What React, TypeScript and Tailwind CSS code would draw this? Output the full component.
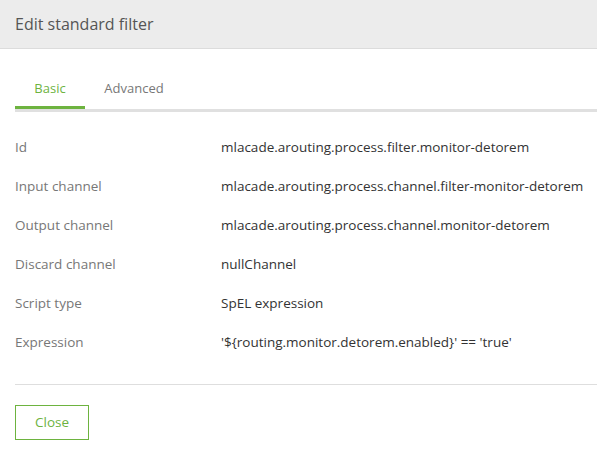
const ROWS: [string, string][] = [
  ["Id", "mlacade.arouting.process.filter.monitor-detorem"],
  ["Input channel", "mlacade.arouting.process.channel.filter-monitor-detorem"],
  ["Output channel", "mlacade.arouting.process.channel.monitor-detorem"],
  ["Discard channel", "nullChannel"],
  ["Script type", "SpEL expression"],
  ["Expression", "'${routing.monitor.detorem.enabled}' == 'true'"],
];

export default function App() {
  return (
    <div
      className="h-[454px] w-[597px] overflow-hidden bg-white text-[13px]"
      style={{ fontFamily: '"Open Sans", "Noto Sans", sans-serif' }}
    >
      <div className="flex h-[49px] items-center border-b border-[#dcdcdc] bg-[#ececec] px-[15px]">
        <h1 className="text-[16px] text-[#555]">Edit standard filter</h1>
      </div>

      <div className="pl-[15px]">
        <div className="mt-[24px] flex border-b-[3px] border-[#e0e0e0]">
          <div className="-mb-[3px] flex h-[36px] w-[70px] items-start justify-center border-b-[3px] border-[#6db33f] pt-[6px] text-[#6db33f]">
            Basic
          </div>
          <div className="flex h-[36px] w-[98px] items-start justify-center pt-[6px] text-[#777]">
            Advanced
          </div>
        </div>

        <div className="pt-[16px] text-[13.5px]">
          {ROWS.map(([label, value]) => (
            <div key={label} className="flex h-[39px] items-center">
              <div className="w-[206px] shrink-0 text-[#777]">{label}</div>
              <div className="whitespace-nowrap text-[#333]">{value}</div>
            </div>
          ))}
        </div>

        <div className="mt-[22px] border-t border-[#dedede]" />

        <button
          type="button"
          className="mt-[20px] h-[35px] w-[74px] border border-[#6db33f] text-[13.5px] text-[#6db33f]"
        >
          Close
        </button>
      </div>
    </div>
  );
}
